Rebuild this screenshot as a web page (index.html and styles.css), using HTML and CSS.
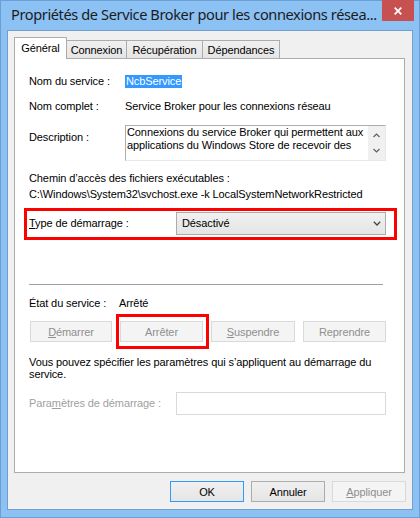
FILE: index.html
```html
<!DOCTYPE html>
<html lang="fr">
<head>
    <meta charset="UTF-8">
    <meta name="viewport" content="width=device-width, initial-scale=1.0">
    <title>Propriétés de Service Broker</title>
    <link rel="stylesheet" href="styles.css">
</head>
<body>
  <div class="window">
    <div class="titlebar">
      <span class="title">Propriétés de Service Broker pour les connexions résea...</span>
      <button class="close" title="Fermer">
        <svg width="8" height="8" viewBox="0 0 8 8"><path d="M0.7 0.7 L7.3 7.3 M7.3 0.7 L0.7 7.3" stroke="#fff" stroke-width="1.8"/></svg>
      </button>
    </div>

    <div class="client">
      <div class="tabs">
        <div class="tab active" style="width: 53px;">Général</div>
        <div class="tab" style="width: 61px;">Connexion</div>
        <div class="tab" style="width: 77px;">Récupération</div>
        <div class="tab" style="width: 78px;">Dépendances</div>
      </div>

      <div class="panel">
        <div class="row">
          <span class="label">Nom du service :</span>
          <span class="selected">NcbService</span>
        </div>
        <div class="row">
          <span class="label">Nom complet :</span>
          <span>Service Broker pour les connexions réseau</span>
        </div>
        <div class="row desc-row">
          <span class="label desc-label">Description :</span>
          <div class="textbox">
            <div class="textbox-text">Connexions du service Broker qui permettent aux<br>applications du Windows Store de recevoir des</div>
            <div class="scrollbar">
              <svg width="7" height="5" viewBox="0 0 7 5"><path d="M0.5 4 L3.5 1 L6.5 4" fill="none" stroke="#606060" stroke-width="1.2"/></svg>
              <svg width="7" height="5" viewBox="0 0 7 5"><path d="M0.5 1 L3.5 4 L6.5 1" fill="none" stroke="#606060" stroke-width="1.2"/></svg>
            </div>
          </div>
        </div>

        <div class="path-label">Chemin d’accès des fichiers exécutables :</div>
        <div class="path">C:\Windows\System32\svchost.exe -k LocalSystemNetworkRestricted</div>

        <div class="row type-row marked">
          <span class="label wide"><u>T</u>ype de démarrage :</span>
          <div class="combo">
            <span>Désactivé</span>
            <svg width="8" height="5" viewBox="0 0 8 5"><path d="M0.8 0.8 L4 4 L7.2 0.8" fill="none" stroke="#444" stroke-width="1.3"/></svg>
          </div>
        </div>

        <hr class="separator">

        <div class="row">
          <span class="label state">État du service :</span>
          <span>Arrêté</span>
        </div>

        <div class="service-buttons">
          <button class="btn" disabled style="width: 82px;"><u>D</u>émarrer</button>
          <span class="marked stop-mark"><button class="btn" disabled style="width: 83px;">Arrêter</button></span>
          <button class="btn" disabled style="width: 84px;"><u>S</u>uspendre</button>
          <button class="btn" disabled style="width: 83px;">Reprendre</button>
        </div>

        <p class="hint">Vous pouvez spécifier les paramètres qui s’appliquent au démarrage du<br>service.</p>

        <div class="row params-row">
          <span class="label wide disabled">Para<u>m</u>ètres de démarrage :</span>
          <div class="input"></div>
        </div>
      </div>

      <div class="actions">
        <button class="btn default">OK</button>
        <button class="btn">Annuler</button>
        <button class="btn" disabled><u>A</u>ppliquer</button>
      </div>
    </div>
  </div>
</body>
</html>
```

FILE: styles.css
```css
body {
  margin: 0;
  font-family: "Liberation Sans", Arial, sans-serif;
  font-size: 11px;
  letter-spacing: -0.1px;
  color: #000;
}
.window {
  width: 420px;
  height: 518px;
  box-sizing: border-box;
  border: 1px solid #6b9fd4;
  background: #8cc1f4;
  padding: 0 6px 7px 6px;
  display: flex;
  flex-direction: column;
}
.titlebar {
  height: 29px;
  display: flex;
  align-items: flex-start;
  justify-content: space-between;
}
.title {
  font-family: "Noto Sans", sans-serif;
  font-size: 14.6px;
  color: #1c1c1c;
  margin: 3px 0 0 4px;
  white-space: nowrap;
  letter-spacing: -0.4px;
}
.close {
  width: 32px;
  height: 21px;
  margin: -1px -1px 0 0;
  border: none;
  padding: 0;
  background: #c75050;
  display: flex;
  align-items: center;
  justify-content: center;
}
.client {
  flex: 1;
  border: 1px solid #729fcd;
  background: #f0f0f0;
  display: flex;
  flex-direction: column;
}
.tabs {
  display: flex;
  align-items: flex-end;
  height: 21px;
  margin: 6px 0 0 6px;
  position: relative;
  z-index: 1;
}
.tab {
  height: 18px;
  box-sizing: border-box;
  border: 1px solid #acacac;
  border-bottom: none;
  background: linear-gradient(#f0f0f0, #e5e5e5);
  margin-left: -1px;
  text-align: center;
  line-height: 19px;
  white-space: nowrap;
}
.tab.active {
  height: 22px;
  margin: 0 0 -1px 0;
  background: #fff;
  line-height: 20px;
  position: relative;
  z-index: 2;
}
.panel {
  height: 415px;
  box-sizing: border-box;
  margin: 0 7px 0 6px;
  border: 1px solid #acacac;
  background: #fff;
  padding: 16px 18px 0 14px;
}
.row {
  display: flex;
  align-items: center;
  line-height: 13px;
  margin-top: 12px;
}
.row:first-child {
  margin-top: 0;
}
.label {
  width: 96px;
  flex: none;
}
.label.wide {
  width: 147px;
}
.label.state {
  width: 90px;
}
.selected {
  background: #3399ff;
  color: #fff;
  padding: 0 1px;
}
.desc-row {
  align-items: flex-start;
}
.desc-label {
  padding-top: 6px;
}
.textbox {
  width: 261px;
  height: 36px;
  box-sizing: border-box;
  border: 1px solid #e3e9ef;
  border-top-color: #abadb3;
  border-left-color: #abadb3;
  display: flex;
}
.textbox-text {
  flex: 1;
  padding-left: 1px;
  white-space: nowrap;
}
.scrollbar {
  width: 17px;
  background: #f0f0f0;
  display: flex;
  flex-direction: column;
  align-items: center;
  justify-content: space-between;
  padding: 7px 0 7px;
}
.path-label {
  margin-top: 11px;
  line-height: 13px;
}
.path {
  margin-top: 3px;
  line-height: 13px;
}
.type-row {
  margin-top: 11px;
}
.combo {
  width: 210px;
  height: 23px;
  box-sizing: border-box;
  border: 1px solid #acacac;
  background: linear-gradient(#f0f0f0, #e5e5e5);
  display: flex;
  align-items: center;
  justify-content: space-between;
  padding: 0 4px 0 5px;
}
.marked {
  position: relative;
}
.marked::after {
  content: "";
  position: absolute;
  left: -5px;
  right: -11px;
  top: -4px;
  bottom: -5px;
  border: 3px solid #f00;
}
.stop-mark::after {
  left: -4px;
  right: -6px;
  top: -7px;
  bottom: -7px;
}
.separator {
  width: 354px;
  margin: 49px 0 0 0;
  border: none;
  border-top: 1px solid #a0a0a0;
}
.service-buttons {
  display: flex;
  justify-content: space-between;
  margin-top: 11px;
  padding-left: 1px;
}
.stop-mark {
  display: flex;
}
.btn {
  width: 74px;
  height: 21px;
  box-sizing: border-box;
  border: 1px solid #acacac;
  background: linear-gradient(#f0f0f0, #e5e5e5);
  font-family: "Liberation Sans", Arial, sans-serif;
  font-size: 11px;
  letter-spacing: -0.1px;
  color: #000;
  padding: 0;
}
.btn.default {
  border-color: #3399ff;
}
.btn:disabled {
  border-color: #d9d9d9;
  background: #f4f4f4;
  color: #8f8f8f;
}
.hint {
  margin: 14px 0 0 0;
  line-height: 12px;
}
.params-row {
  margin-top: 12px;
}
.disabled {
  color: #9f9f9f;
}
.input {
  width: 210px;
  height: 23px;
  box-sizing: border-box;
  border: 1px solid #d9d9d9;
  background: #fff;
}
.actions {
  display: flex;
  justify-content: flex-end;
  gap: 7px;
  margin: 8px 6px 0 0;
}
```
